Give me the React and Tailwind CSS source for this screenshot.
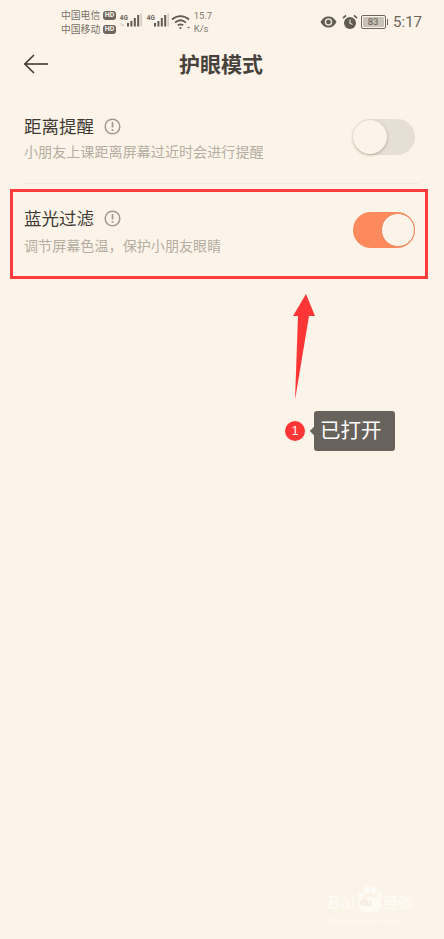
const cjk = "font-['Roboto','Noto_Sans_CJK_SC',sans-serif]";

const Signal = ({ label, small }) => (
  <div className="relative h-[20px] w-[22px]">
    <span className="absolute left-0 top-[2px] text-[6.5px] font-bold leading-[8px] text-[#6d675f]">{label}</span>
    {small && <span className="absolute left-0 top-[10px] text-[4px] leading-[6px] text-[#a9a398]">1x</span>}
    <svg width="16" height="14" viewBox="0 0 16 14" className="absolute left-[6px] top-[1px]">
      <rect x="1" y="10" width="2" height="3.5" fill="#5f5a52" />
      <rect x="4.4" y="8" width="2" height="5.5" fill="#5f5a52" />
      <rect x="7.8" y="5" width="2" height="8.5" fill="#5f5a52" />
      <rect x="11.2" y="2" width="2" height="11.5" fill="#5f5a52" />
      <rect x="14.6" y="0.5" width="1" height="13" fill="#b9b3a8" />
    </svg>
  </div>
);

const StatusBar = () => (
  <div className="flex h-[44px] items-center pl-[61px] pr-[22px]">
    <div className="flex flex-col gap-[3px] text-[9.8px] leading-[11px] text-[#777168]">
      <div className="flex items-center gap-[3px]">
        <span>中国电信</span>
        <span className="rounded-[3px] bg-[#6d675f] px-[1.5px] text-[7px] font-bold leading-[9px] text-[#fdf4e9]">HD</span>
      </div>
      <div className="flex items-center gap-[3px]">
        <span>中国移动</span>
        <span className="rounded-[3px] bg-[#6d675f] px-[1.5px] text-[7px] font-bold leading-[9px] text-[#fdf4e9]">HD</span>
      </div>
    </div>
    <div className="ml-[4px] flex items-center gap-[5px]">
      <Signal label="4G" small />
      <Signal label="4G" />
    </div>
    <svg width="20" height="16" viewBox="0 0 20 16" fill="none" stroke="#5f5a52" strokeWidth="1.7" className="ml-[2px]">
      <path d="M1 5.5C6 1 13 1 18 5.5" />
      <path d="M4 8.6C7.5 5.6 11.5 5.6 15 8.6" />
      <path d="M6.8 11.4C8.6 10 10.4 10 12.2 11.4" />
      <circle cx="9.5" cy="14" r="1.1" fill="#5f5a52" stroke="none" />
      <path d="M16.5 13.5h2" strokeWidth="1.2" />
    </svg>
    <div className="ml-[3px] flex flex-col items-start text-[9.5px] leading-[13px] text-[#817b71]">
      <span>15.7</span>
      <span>K/s</span>
    </div>
    <div className="ml-auto flex items-center">
      <svg width="17" height="12" viewBox="0 0 17 12">
        <path d="M0.5 6C3 1.5 5.8 0.5 8.5 0.5S14 1.5 16.5 6C14 10.5 11.2 11.5 8.5 11.5S3 10.5 0.5 6Z" fill="#5f5a52" />
        <circle cx="8.5" cy="6" r="3.8" fill="#e9e0d3" />
        <circle cx="8.5" cy="6" r="2.3" fill="#5f5a52" />
      </svg>
      <svg width="16" height="16" viewBox="0 0 16 16" className="ml-[5px]">
        <circle cx="8" cy="9" r="6" fill="#5f5a52" />
        <path d="M8 5.5V9.2L10.5 10.5" stroke="#e9e0d3" strokeWidth="1.2" fill="none" />
        <path d="M1 4.2L4 1.4M15 4.2L12 1.4" stroke="#5f5a52" strokeWidth="1.6" />
      </svg>
      <div className="ml-[3px] flex items-center">
        <div className="flex h-[14px] w-[25px] items-center justify-center rounded-[2px] border border-[#6d675f] p-[1px]">
          <span className="flex h-full w-full items-center justify-center rounded-[1px] bg-[#c9c2b6] text-[9.5px] leading-none text-[#5f5a52]">83</span>
        </div>
        <div className="ml-[1px] h-[6px] w-[1.5px] bg-[#6d675f]" />
      </div>
      <span className="ml-[5px] text-[15px] leading-none text-[#6a645b]">5:17</span>
    </div>
  </div>
);

const Header = () => (
  <div className="relative flex h-[42px] items-center justify-center pr-[2px]">
    <svg width="26" height="20" viewBox="0 0 26 20" fill="none" stroke="#3e3a35" strokeWidth="1.6" className="absolute left-[23px] top-[10px]">
      <path d="M25 10H2" />
      <path d="M11 1L1.8 10L11 19" />
    </svg>
    <h1 className="text-[21px] font-bold leading-none text-[#47423b]">护眼模式</h1>
  </div>
);

const InfoIcon = () => (
  <svg width="17" height="17" viewBox="0 0 17 17" fill="none" className="ml-[10px] mt-[-3px]">
    <circle cx="8.5" cy="8.5" r="7.3" stroke="#9f998e" strokeWidth="1.5" />
    <path d="M8.5 4v5.5" stroke="#9f998e" strokeWidth="1.7" />
    <circle cx="8.5" cy="12" r="1" fill="#9f998e" />
  </svg>
);

const Toggle = ({ on }) => (
  <div className={`mb-[4px] flex h-[36px] w-[62px] items-center rounded-full ${on ? "justify-end bg-[#fc8a5c]" : "justify-start bg-[#e6dfd5]"}`}>
    <div className={`h-[34px] w-[34px] rounded-full bg-[#fdf4e9] ${on ? "border border-[#e88a62]" : "shadow-[0_1px_3px_rgba(90,75,55,0.4)]"}`} />
  </div>
);

const Row = ({ title, desc, on }) => (
  <div className="flex items-center justify-between">
    <div>
      <div className="flex h-[24px] items-center">
        <span className="text-[17.5px] leading-none text-[#3f3a34]">{title}</span>
        <InfoIcon />
      </div>
      <p className={`${on ? "mt-[4px]" : "mt-[2px]"} text-[14.1px] leading-[20px] text-[#b4aea3]`}>{desc}</p>
    </div>
    <Toggle on={on} />
  </div>
);

const Watermark = () => (
  <div className="absolute bottom-[12px] right-[24px] w-[92px] text-[#fefaf4]">
    <svg width="26" height="28" viewBox="0 0 26 28" fill="#fefaf4" className="absolute left-[29px] top-[-8px]">
      <ellipse cx="4" cy="11" rx="3" ry="4" />
      <ellipse cx="10" cy="5" rx="3" ry="4" />
      <ellipse cx="17" cy="5" rx="3" ry="4" />
      <ellipse cx="22.5" cy="11" rx="3" ry="4" />
      <ellipse cx="13" cy="20" rx="12" ry="7.5" />
    </svg>
    <div className="relative flex h-[20px] items-center">
      <span className="font-['Liberation_Sans',sans-serif] text-[18px] font-bold leading-none">Bai</span>
      <span className="relative ml-[4px] text-[10px] font-bold leading-none text-[#f4e9dc]">du</span>
      <span className="ml-[12px] text-[15px] font-bold leading-none">经验</span>
    </div>
    <div className="mt-[3px] whitespace-nowrap text-[9px] leading-[11px]">jingyan.baidu.com</div>
  </div>
);

const Annotation = () => (
  <>
    <div className="absolute left-[10px] top-[189px] h-[90px] w-[418px] border-[3px] border-[#ff3b3b]" />
    <svg width="26" height="110" viewBox="0 0 26 110" className="absolute left-[292px] top-[292px]">
      <path d="M14 2L23 24L17 24L3 108L6 24L1 24Z" fill="#ff3636" />
    </svg>
    <div className="absolute left-[285px] top-[411px] flex items-center">
      <div className="flex h-[20px] w-[20px] items-center justify-center rounded-full bg-[#ff3636] font-['Liberation_Sans',sans-serif] text-[12px] leading-none text-white">1</div>
      <div className="ml-[3px] h-[6px] w-[6px] translate-x-[3px] rotate-45 bg-[#67635c]" />
      <div className="flex h-[40px] w-[81px] items-center rounded-[3px] bg-[#67635c] pl-[6px] text-[20.5px] leading-none text-white">已打开</div>
    </div>
  </>
);

export default function App() {
  return (
    <div className={`relative h-[939px] w-[444px] overflow-hidden bg-[#fdf4e9] ${cjk}`}>
      <StatusBar />
      <Header />
      <div className="pl-[24px] pr-[29px] pt-[30px]">
        <Row title="距离提醒" desc="小朋友上课距离屏幕过近时会进行提醒" />
        <div className="mb-[24px] mr-[-4px] mt-[21px] h-px bg-[#f3eadf]" />
        <Row title="蓝光过滤" desc="调节屏幕色温，保护小朋友眼睛" on />
      </div>
      <Annotation />
      <Watermark />
    </div>
  );
}
